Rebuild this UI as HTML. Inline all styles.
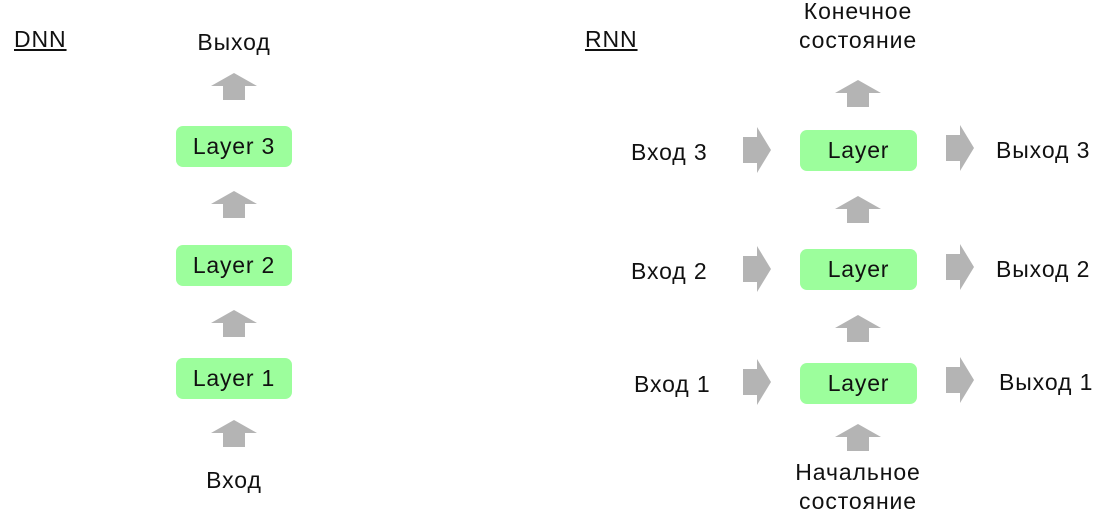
<!DOCTYPE html>
<html><head><meta charset="utf-8"><style>
body{margin:0;width:1114px;height:528px;background:#fff;position:relative;overflow:hidden;font-family:"Liberation Sans",sans-serif;color:#111}
.t{position:absolute;font-size:23px;letter-spacing:0.9px;line-height:30px;white-space:nowrap}
.c{text-align:center;transform:translateX(-50%)}
.box{position:absolute;background:#9cfe9c;border-radius:7px;font-size:23px;letter-spacing:0.8px;display:flex;align-items:center;justify-content:center}
svg{position:absolute}
</style></head><body>
<div class="t" style="left:14px;top:24px;text-decoration:underline">DNN</div>
<div class="t" style="left:585px;top:24px;text-decoration:underline">RNN</div>

<div class="t c" style="left:234px;top:27px">Выход</div>
<div class="t c" style="left:234px;top:465px">Вход</div>
<div class="box" style="left:176px;top:126px;width:116px;height:41px">Layer 3</div>
<div class="box" style="left:176px;top:245px;width:116px;height:41px">Layer 2</div>
<div class="box" style="left:176px;top:358px;width:116px;height:41px">Layer 1</div>

<svg width="0" height="0"><defs>
<polygon id="up" points="23,0 46,13 34,13 34,27 12,27 12,13 0,13" fill="#b4b4b4"/>
<polygon id="rt" points="0,10 14,10 14,0 28,23 14,46 14,36 0,36" fill="#b4b4b4"/>
</defs></svg>
<svg style="left:211px;top:73px" width="46" height="27"><use href="#up"/></svg>
<svg style="left:211px;top:191px" width="46" height="27"><use href="#up"/></svg>
<svg style="left:211px;top:310px" width="46" height="27"><use href="#up"/></svg>
<svg style="left:211px;top:420px" width="46" height="27"><use href="#up"/></svg>

<div class="t c" style="left:858px;top:-3px;line-height:29px">Конечное<br>состояние</div>
<div class="t c" style="left:858px;top:458px;line-height:29px">Начальное<br>состояние</div>
<div class="box" style="left:800px;top:130px;width:117px;height:41px">Layer</div>
<div class="box" style="left:800px;top:249px;width:117px;height:41px">Layer</div>
<div class="box" style="left:800px;top:363px;width:117px;height:41px">Layer</div>
<svg style="left:835px;top:80px" width="46" height="27"><use href="#up"/></svg>
<svg style="left:835px;top:196px" width="46" height="27"><use href="#up"/></svg>
<svg style="left:835px;top:315px" width="46" height="27"><use href="#up"/></svg>
<svg style="left:835px;top:424px" width="46" height="27"><use href="#up"/></svg>

<svg style="left:743px;top:127px" width="28" height="46"><use href="#rt"/></svg>
<svg style="left:743px;top:246px" width="28" height="46"><use href="#rt"/></svg>
<svg style="left:743px;top:359px" width="28" height="46"><use href="#rt"/></svg>
<svg style="left:946px;top:125px" width="28" height="46"><use href="#rt"/></svg>
<svg style="left:946px;top:244px" width="28" height="46"><use href="#rt"/></svg>
<svg style="left:946px;top:357px" width="28" height="46"><use href="#rt"/></svg>

<div class="t" style="left:631px;top:137px">Вход 3</div>
<div class="t" style="left:631px;top:256px">Вход 2</div>
<div class="t" style="left:634px;top:369px">Вход 1</div>
<div class="t" style="left:996px;top:135px">Выход 3</div>
<div class="t" style="left:996px;top:254px">Выход 2</div>
<div class="t" style="left:999px;top:367px">Выход 1</div>
</body></html>
